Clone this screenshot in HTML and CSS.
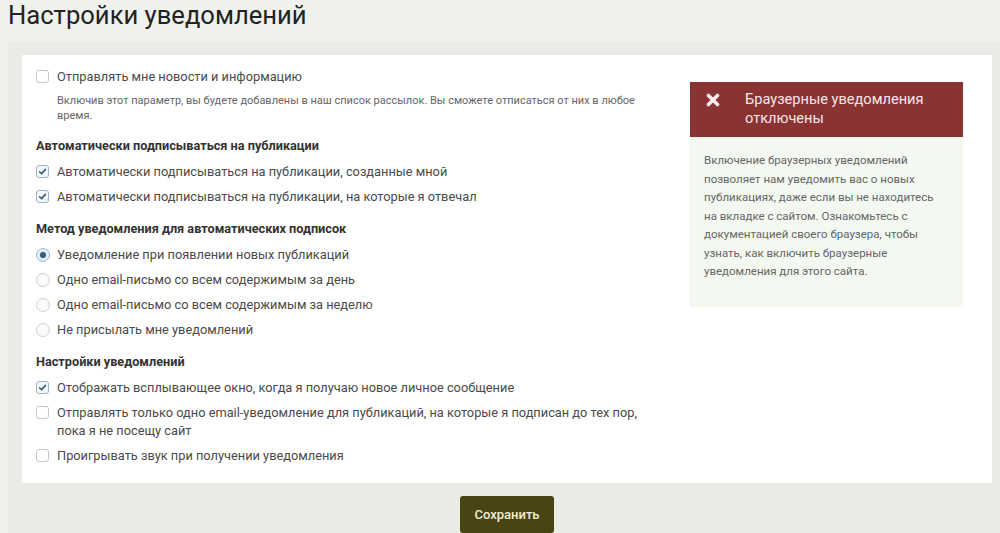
FILE: index.html
```html
<!DOCTYPE html>
<html lang="ru">
<head>
    <meta charset="UTF-8">
    <meta name="viewport" content="width=device-width, initial-scale=1.0">
    <title>Настройки уведомлений</title>
    <link rel="stylesheet" href="styles.css">
</head>
<body>
    <h1>Настройки уведомлений</h1>
    <div class="panel">
        <div class="card">
            <div class="settings">
                <label class="option">
                    <span class="box"></span>
                    <span>Отправлять мне новости и информацию</span>
                </label>
                <p class="hint">Включив этот параметр, вы будете добавлены в наш список рассылок. Вы сможете отписаться от них в любое время.</p>

                <h3>Автоматически подписываться на публикации</h3>
                <label class="option">
                    <span class="box checked"><svg viewBox="0 0 13 13"><path d="M3 6.8 5.4 9 10 4"/></svg></span>
                    <span>Автоматически подписываться на публикации, созданные мной</span>
                </label>
                <label class="option">
                    <span class="box checked"><svg viewBox="0 0 13 13"><path d="M3 6.8 5.4 9 10 4"/></svg></span>
                    <span>Автоматически подписываться на публикации, на которые я отвечал</span>
                </label>

                <h3>Метод уведомления для автоматических подписок</h3>
                <label class="option">
                    <span class="radio selected"></span>
                    <span>Уведомление при появлении новых публикаций</span>
                </label>
                <label class="option">
                    <span class="radio"></span>
                    <span>Одно email-письмо со всем содержимым за день</span>
                </label>
                <label class="option">
                    <span class="radio"></span>
                    <span>Одно email-письмо со всем содержимым за неделю</span>
                </label>
                <label class="option">
                    <span class="radio"></span>
                    <span>Не присылать мне уведомлений</span>
                </label>

                <h3>Настройки уведомлений</h3>
                <label class="option">
                    <span class="box checked"><svg viewBox="0 0 13 13"><path d="M3 6.8 5.4 9 10 4"/></svg></span>
                    <span>Отображать всплывающее окно, когда я получаю новое личное сообщение</span>
                </label>
                <label class="option">
                    <span class="box"></span>
                    <span>Отправлять только одно email-уведомление для публикаций, на которые я подписан до тех пор, пока я не посещу сайт</span>
                </label>
                <label class="option">
                    <span class="box"></span>
                    <span>Проигрывать звук при получении уведомления</span>
                </label>
            </div>

            <div class="notice">
                <div class="notice-head">
                    <svg class="notice-icon" viewBox="0 0 14 14"><path d="M2.5 2.5 11.5 11.5M11.5 2.5 2.5 11.5"/></svg>
                    <span>Браузерные уведомления отключены</span>
                </div>
                <div class="notice-body">
                    Включение браузерных уведомлений позволяет нам уведомить вас о новых публикациях, даже если вы не находитесь на вкладке с сайтом. Ознакомьтесь с документацией своего браузера, чтобы узнать, как включить браузерные уведомления для этого сайта.
                </div>
            </div>
        </div>
        <div class="actions">
            <button class="save">Сохранить</button>
        </div>
    </div>
</body>
</html>
```

FILE: styles.css
```css
body {
    margin: 0;
    background-color: #eef1ec;
    font-family: Roboto, "Liberation Sans", sans-serif;
    color: #444;
    min-height: 533px;
}
h1 {
    margin: 0 0 12px 8px;
    font-size: 25.6px;
    font-weight: 400;
    line-height: 30px;
    color: #222;
}
.panel {
    margin-left: 8px;
    background-color: #e9ebe7;
    padding: 13px 8px 20px 14px;
    min-height: 470px;
    box-sizing: border-box;
}
.card {
    background-color: #fff;
    padding: 13px 29px 18px 14px;
    display: grid;
    grid-template-columns: 1fr 273px;
    column-gap: 40px;
    align-items: start;
}
.option {
    display: flex;
    align-items: flex-start;
    gap: 8px;
    font-size: 12.8px;
    line-height: 18px;
    color: #4a4a4a;
    margin-bottom: 7px;
}
.box {
    flex: none;
    width: 13px;
    height: 13px;
    margin-top: 2px;
    border: 1px solid #c6c6c6;
    border-radius: 3px;
    box-sizing: border-box;
    background-color: #fff;
    display: flex;
}
.box.checked {
    border-color: #9fb4c6;
    background-color: #f4f8fb;
}
.box svg {
    width: 11px;
    height: 11px;
    fill: none;
    stroke: #2f5b7c;
    stroke-width: 1.8;
    stroke-linecap: round;
    stroke-linejoin: round;
}
.radio {
    flex: none;
    width: 14px;
    height: 14px;
    margin-top: 2px;
    margin-right: -1px;
    border: 1px solid #d0d0d0;
    border-radius: 50%;
    box-sizing: border-box;
    background-color: #fbfbfb;
    display: flex;
    align-items: center;
    justify-content: center;
}
.radio.selected {
    border-color: #9ebad0;
    background-color: #e4eef6;
}
.radio.selected::after {
    content: "";
    width: 6px;
    height: 6px;
    border-radius: 50%;
    background-color: #2f5b7c;
}
.hint {
    margin: 0 0 0 21px;
    font-size: 11px;
    line-height: 15px;
    color: #666;
}
h3 {
    margin: 14px 0 8px;
    font-size: 12.7px;
    font-weight: 700;
    line-height: 18px;
    color: #333;
}
.settings .option:last-child {
    margin-bottom: 0;
}
.notice {
    margin-top: 14px;
}
.notice-head {
    background-color: #8a3333;
    color: #f7e6e6;
    display: flex;
    align-items: flex-start;
    gap: 25px;
    padding: 8px 14px 9px 16px;
    font-size: 14.6px;
    line-height: 19px;
}
.notice-icon {
    flex: none;
    width: 14px;
    height: 14px;
    margin-top: 3px;
    fill: none;
    stroke: #f7eeee;
    stroke-width: 3.6;
    stroke-linecap: round;
}
.notice-body {
    background-color: #f3f8f1;
    padding: 14px 24px 26px 14px;
    font-size: 11.5px;
    line-height: 18.5px;
    color: #666;
}
.actions {
    display: flex;
    justify-content: center;
    padding-top: 13px;
}
.save {
    background-color: #494512;
    color: #f1eed6;
    border: none;
    border-radius: 3px;
    width: 94px;
    height: 37px;
    font-family: inherit;
    font-size: 13px;
    font-weight: 500;
    cursor: pointer;
}
```
